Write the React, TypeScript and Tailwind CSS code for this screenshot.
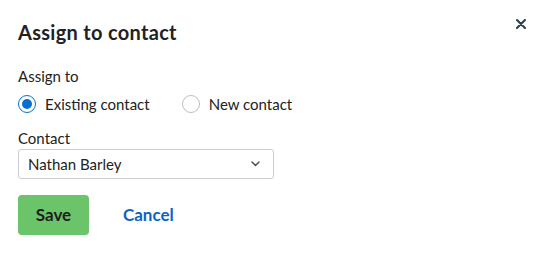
import React, { useState } from "react";

export default function App() {
  const [choice, setChoice] = useState("existing");
  return (
    <div
      className="relative w-[545px] h-[254px] bg-white text-[#222222]"
      style={{ fontFamily: "Lato, 'Noto Sans', sans-serif" }}
    >
      <button className="absolute left-[514px] top-[17px] w-[13px] h-[13px] flex items-center justify-center text-[#2d3b45]">
        <svg width="10" height="10" viewBox="0 0 10 10">
          <path d="M1 1L9 9M9 1L1 9" stroke="currentColor" strokeWidth="2" strokeLinecap="round" />
        </svg>
      </button>
      <div className="pl-[18px] pt-[20px]">
        <h1 className="text-[20px] leading-[24px] font-bold tracking-[0.3px]">Assign to contact</h1>
        <div className="mt-[22px] text-[15px] leading-[20px]">Assign to</div>
        <div className="mt-[6px] flex items-center h-[24px]">
          <label className="flex items-center cursor-pointer" onClick={() => setChoice("existing")}>
            <span
              className={
                choice === "existing"
                  ? "w-[18px] h-[18px] rounded-full border-[1.5px] border-[#0770cf] flex items-center justify-center"
                  : "w-[18px] h-[18px] rounded-full border border-[#b7bfc6]"
              }
            >
              {choice === "existing" && <span className="w-[10px] h-[10px] rounded-full bg-[#0770cf]" />}
            </span>
            <span className="ml-[9px] text-[15px]">Existing contact</span>
          </label>
          <label className="ml-[32px] flex items-center cursor-pointer" onClick={() => setChoice("new")}>
            <span
              className={
                choice === "new"
                  ? "w-[18px] h-[18px] rounded-full border-[1.5px] border-[#0770cf] flex items-center justify-center"
                  : "w-[18px] h-[18px] rounded-full border border-[#b7bfc6]"
              }
            >
              {choice === "new" && <span className="w-[10px] h-[10px] rounded-full bg-[#0770cf]" />}
            </span>
            <span className="ml-[9px] text-[15px]">New contact</span>
          </label>
        </div>
        <div className="mt-[12px] text-[15px] leading-[20px]">Contact</div>
        <div className="mt-[1px] w-[256px] h-[30px] border border-[#c7cdd1] rounded-[3px] flex items-center justify-between pl-[9px] pr-[13px]">
          <span className="text-[15px]">Nathan Barley</span>
          <svg width="9" height="6" viewBox="0 0 9 6" className="text-[#4a5560]">
            <path d="M1 1L4.5 4.5L8 1" stroke="currentColor" strokeWidth="1.5" fill="none" strokeLinecap="round" strokeLinejoin="round" />
          </svg>
        </div>
        <div className="mt-[16px] flex items-center">
          <button className="w-[71px] h-[40px] rounded-[4px] bg-[#6bc46a] text-[17px] font-bold text-[#1e1e1e]">
            Save
          </button>
          <button className="ml-[34px] text-[17px] font-bold text-[#0b63c4]">Cancel</button>
        </div>
      </div>
    </div>
  );
}
